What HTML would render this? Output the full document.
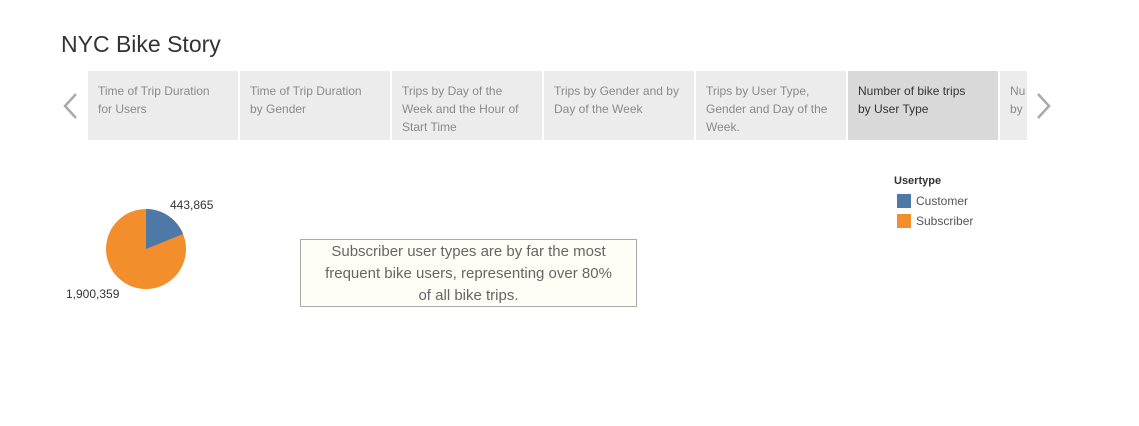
<!DOCTYPE html>
<html><head><meta charset="utf-8"><style>
body{margin:0;width:1139px;height:426px;background:#fff;font-family:"Liberation Sans",sans-serif;position:relative;overflow:hidden}
.a{position:absolute}
.tab{position:absolute;top:71px;height:69px;width:150px;background:#ececec;color:#8a8a8a;font-size:12px;line-height:18px;padding:11px 10px 0 10px;box-sizing:border-box;white-space:nowrap;overflow:hidden}
.sel{background:#d9d9d9;color:#333}
</style></head><body>
<div class="a" style="left:61px;top:31px;font-size:23px;color:#333">NYC Bike Story</div>
<svg class="a" style="left:60px;top:92px" width="20" height="28"><path d="M16 2 L5 14 L16 26" stroke="#aaa" stroke-width="2.5" fill="none"/></svg>
<svg class="a" style="left:1034px;top:92px" width="20" height="28"><path d="M4 2 L15 14 L4 26" stroke="#aaa" stroke-width="2.5" fill="none"/></svg>
<div class="tab" style="left:88px">Time of Trip Duration<br>for Users</div>
<div class="tab" style="left:240px">Time of Trip Duration<br>by Gender</div>
<div class="tab" style="left:392px">Trips by Day of the<br>Week and the Hour of<br>Start Time</div>
<div class="tab" style="left:544px">Trips by Gender and by<br>Day of the Week</div>
<div class="tab" style="left:696px">Trips by User Type,<br>Gender and Day of the<br>Week.</div>
<div class="tab sel" style="left:848px">Number of bike trips<br>by User Type</div>
<div class="tab" style="left:1000px;width:27px">Nu<br>by</div>
<svg class="a" style="left:0;top:0" width="300" height="320">
<circle cx="146" cy="249" r="40" fill="#f28e2b"/>
<path d="M146 249 L146 209 A40 40 0 0 1 183.1 234 Z" fill="#4e79a7"/>
</svg>
<div class="a" style="left:170px;top:198px;font-size:12px;color:#333">443,865</div>
<div class="a" style="left:66px;top:287px;font-size:12px;color:#333">1,900,359</div>
<div class="a" style="left:894px;top:175px;font-size:11px;font-weight:bold;color:#333">Usertype</div>
<div class="a" style="left:897px;top:194px;width:14px;height:14px;background:#4e79a7"></div>
<div class="a" style="left:916px;top:194px;font-size:12px;color:#555">Customer</div>
<div class="a" style="left:897px;top:214px;width:14px;height:14px;background:#f28e2b"></div>
<div class="a" style="left:916px;top:214px;font-size:12px;color:#555">Subscriber</div>
<div class="a" style="left:300px;top:239px;width:337px;height:68px;box-sizing:border-box;border:1px solid #aaa;background:#fefdf6;color:#666;font-size:15px;line-height:22px;text-align:center;padding-top:1px;white-space:nowrap">Subscriber user types are by far the most<br>frequent bike users, representing over 80%<br>of all bike trips.</div>
</body></html>
